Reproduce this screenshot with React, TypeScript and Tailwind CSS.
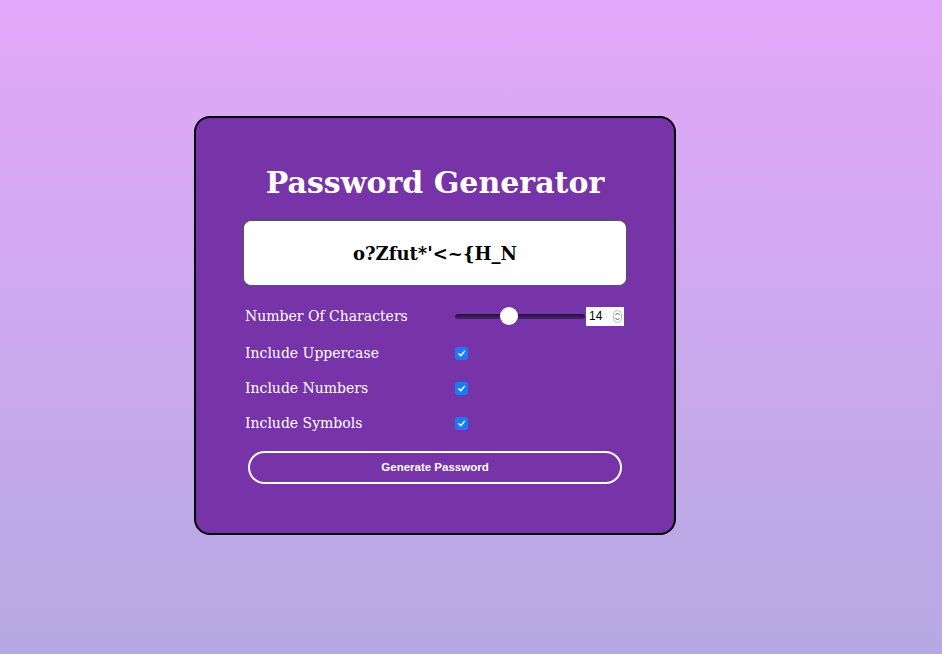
import { useState } from 'react';

const serif = { fontFamily: '"DejaVu Serif", Georgia, serif' };

const Check = () => (
    <div className="w-[13px] h-[13px] rounded-[3px] bg-[#1a7cf5] flex items-center justify-center">
        <svg width="9" height="9" viewBox="0 0 10 10" fill="none">
            <path d="M2 5.3 L4.2 7.5 L8.2 2.6" stroke="white" strokeWidth="1.6" strokeLinecap="round" strokeLinejoin="round" />
        </svg>
    </div>
);

const App = () => {
    const [length] = useState(14);
    const pct = ((length - 6) / 20) * 100;

    const options = ['Include Uppercase', 'Include Numbers', 'Include Symbols'];

    return (
        <div className="min-h-screen w-full bg-gradient-to-b from-[#e3a8f9] to-[#b5a9e3] pt-[116px] pl-[194px]" style={serif}>
            <div className="w-[482px] h-[419px] border-2 border-black rounded-[16px] bg-[#7733a8] pt-[45px] px-[47px] flex flex-col">
                {/* Title */}
                <h1 className="text-white text-[30px] font-bold leading-[40px] text-center">Password Generator</h1>

                {/* Output */}
                <div className="mt-[17px] h-[66px] bg-white border border-[#555] rounded-[8px] flex items-center justify-center">
                    <span className="text-[18px] font-bold text-black">o?Zfut*'&lt;~{'{'}H_N</span>
                </div>

                {/* Length */}
                <div className="mt-[20px] ml-[2px] h-[20px] flex items-center">
                    <span className="w-[210px] text-white text-[14px]">Number Of Characters</span>
                    <div className="relative w-[130px] h-[20px] flex items-center">
                        <div className="w-full h-[5px] rounded-full bg-gradient-to-b from-[#2a0f45] to-[#4a2275]" />
                        <div
                            className="absolute top-[1px] w-[18px] h-[18px] rounded-full bg-white"
                            style={{ left: `calc(${pct}% - ${pct * 0.18}px)` }}
                        />
                    </div>
                    <div className="ml-[1px] w-[38px] h-[19px] bg-white flex items-center justify-between pl-[3px] pr-[2px]">
                        <span className="text-[12px] text-black" style={{ fontFamily: '"Liberation Sans", Arial, sans-serif' }}>{length}</span>
                        <svg width="9" height="13" viewBox="0 0 9 13" fill="none">
                            <rect x="0.5" y="0.5" width="8" height="12" rx="4" stroke="#bbb" />
                            <path d="M2.5 5 L4.5 3 L6.5 5" stroke="#555" strokeWidth="1" />
                            <path d="M2.5 8 L4.5 10 L6.5 8" stroke="#555" strokeWidth="1" />
                        </svg>
                    </div>
                </div>

                {/* Options */}
                <div className="ml-[2px] mt-[17px] flex flex-col gap-[15px]">
                    {options.map((o) => (
                        <div key={o} className="h-[20px] flex items-center">
                            <span className="w-[210px] text-white text-[14px]">{o}</span>
                            <Check />
                        </div>
                    ))}
                </div>

                {/* Button */}
                <button
                    className="mt-[18px] mx-[5px] h-[33px] rounded-full border-2 border-white text-white text-[11.5px] font-bold"
                    style={{ fontFamily: '"Liberation Sans", Arial, sans-serif' }}
                >
                    Generate Password
                </button>
            </div>
        </div>
    );
};

export default App;
